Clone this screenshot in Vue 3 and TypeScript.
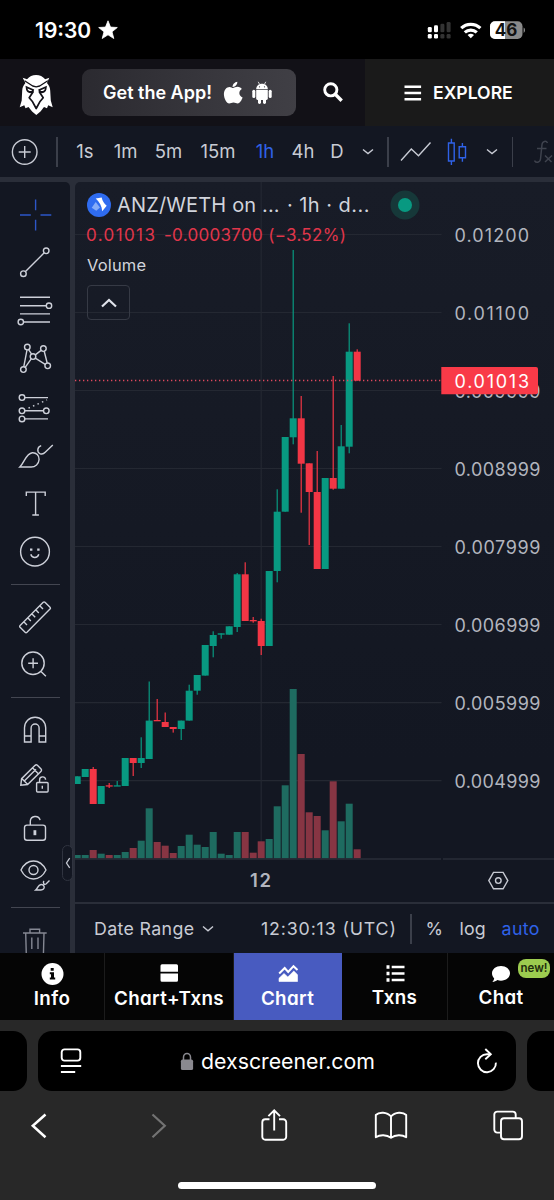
<script setup lang="ts">
type Candle = [top: number, bottom: number, high: number, low: number, up: 0 | 1, volumeTop: number]

// Pixel rows on the price pane: body top, body bottom, wick top, wick bottom, direction, volume top
const rows: Candle[] = [
  [776.3, 784, 776.3, 784, 1, 855],
  [769, 777, 769, 777, 1, 855],
  [769, 804, 767, 804, 0, 850],
  [786, 804, 786, 804, 1, 853.7],
  [785.3, 786.6, 783, 788, 0, 855],
  [785.3, 786.6, 781, 786, 1, 855],
  [758, 786, 758, 786, 1, 852],
  [758, 763, 758, 776, 0, 848],
  [758, 763, 737.3, 768, 1, 840.7],
  [720.6, 759, 681.5, 759, 1, 808.3],
  [720, 721.3, 699, 721, 0, 842],
  [722, 727, 712.5, 727, 0, 845.7],
  [727, 729, 727, 732.6, 0, 853],
  [720.6, 729, 720.6, 740, 1, 846],
  [690.7, 720.6, 684.7, 720.6, 1, 834.7],
  [675, 690.7, 675, 694.7, 1, 844.7],
  [645, 675.6, 645, 675.6, 1, 847],
  [635, 646, 631.3, 657.3, 1, 832],
  [633.3, 634.7, 633.3, 638.7, 1, 853.7],
  [626.3, 634.7, 626.3, 634.7, 1, 855],
  [574.3, 627, 573, 632, 1, 832],
  [574.3, 621, 562.3, 621, 0, 832],
  [620, 621.3, 617, 622.7, 0, 852.7],
  [621, 646, 618.7, 655, 0, 841.3],
  [571, 646, 571, 646, 1, 839],
  [511.7, 571, 489.3, 582.3, 1, 806.3],
  [437, 511.7, 437, 511.7, 1, 785.3],
  [418.3, 437.3, 250, 444.3, 1, 689],
  [418.3, 463.7, 396, 512.7, 0, 754],
  [463.3, 492, 463.3, 545, 0, 812.3],
  [492, 569, 451, 569, 0, 816],
  [478, 569, 478, 569, 1, 830.3],
  [478, 488.7, 376, 489.7, 0, 781.3],
  [446.3, 488.7, 425, 488.7, 1, 821.3],
  [351.7, 446.7, 323.3, 453.3, 1, 803.7],
  [351.7, 380.7, 349.3, 380.7, 0, 849.3],
]

const candles = rows.map(([top, bottom, high, low, up, vol], i) => ({
  x: 77.2 + i * 8,
  top,
  height: bottom - top,
  high,
  low,
  cls: up ? 'up' : 'down',
  vol,
}))

const prices = [
  { y: 234.5, label: '0.01200', w: 74.5 },
  { y: 312.5, label: '0.01100', w: 74.5 },
  { y: 390.5, label: '0.009999', w: 86 },
  { y: 468.5, label: '0.008999', w: 86 },
  { y: 546.5, label: '0.007999', w: 86 },
  { y: 624.5, label: '0.006999', w: 86 },
  { y: 702.7, label: '0.005999', w: 86 },
  { y: 780.7, label: '0.004999', w: 86 },
]
</script>

<template>
  <div class="phone">
    <header class="status">
      <span class="clock">19:30</span>
      <svg class="star" width="20" height="20" viewBox="0 0 20 20"><path d="M10 .8l2.5 6.3 6.8.4-5.3 4.3 1.8 6.7L10 14.8l-5.8 3.7L6 11.8.7 7.5l6.8-.4z" fill="#fff" stroke="#fff" stroke-width=".8" stroke-linejoin="round" /></svg>
      <svg class="signals" width="100" height="22" viewBox="425 20 100 22">
        <g fill="#fff">
          <rect x="427.8" y="27" width="4" height="5.3" rx="1.3" /><rect x="434" y="25.3" width="4" height="7" rx="1.3" />
          <rect x="427.8" y="34" width="4" height="4.6" rx="1.3" /><rect x="434" y="34" width="4" height="4.6" rx="1.3" />
        </g>
        <g fill="#333">
          <rect x="440.4" y="23.7" width="4" height="8.6" rx="1.3" /><rect x="446.6" y="22" width="4" height="10.3" rx="1.3" />
          <rect x="440.4" y="34" width="4" height="4.6" rx="1.3" /><rect x="446.6" y="34" width="4" height="4.6" rx="1.3" />
        </g>
        <g fill="none" stroke="#fff" stroke-width="3.200">
          <path d="M461.2 28.2a14 14 0 0 1 19.2 0" /><path d="M464.8 32.400a9 9 0 0 1 12 0" />
        </g>
        <path d="M470.8 38.2l-3.2-3.200a5 5 0 0 1 6.4 0z" fill="#fff" />
        <rect x="490" y="21.3" width="32.5" height="17.6" rx="5" fill="#8a8a8a" />
        <path d="M495 21.3h10v17.6h-10a5 5 0 0 1-5-5v-7.6a5 5 0 0 1 5-5z" fill="#fff" />
        <path d="M523.6 27.500c2 1 2 4.400 0 5.400z" fill="#8a8a8a" />
        <text x="506" y="36" text-anchor="middle" class="battery">46</text>
      </svg>
    </header>

    <nav class="site">
      <svg class="owl" width="36" height="42" viewBox="18 73 36 42">
        <path fill="#fff" d="M22.700 77.800l4.300 1.400c2.300-2.700 5.500-4.200 9.100-4.200s6.800 1.500 9.100 4.200l4.100-1.400-2.300 5.200c2 2.200 3 4.500 3.200 7.500l.6 10 1.900 6.800-4.500-2-1.200 3-3-1.400-3.500 4.600-4.200 3.500-4.200-3.500-3.600-4.600-3 1.400-1.200-3-4.600 2 2-6.800.5-10c.2-3 1.300-5.300 3.200-7.500z" />
        <g fill="none" stroke="#121117" stroke-linejoin="round" stroke-linecap="round">
          <path d="M25 81l7.700 5 3.500.8 3.500-.8 7.700-5" stroke-width="1.300" />
          <path d="M33 92l-3.800 5.800 3.400 4 3.600 6.700 3.600-6.700 3.400-4-3.800-5.800" stroke-width="1.700" />
        </g>
        <path d="M25.500 85.800l8.700 3.700-1.200 3.600c-3.500.8-6.500-.7-7-3.600zM46.900 85.800l-8.700 3.700 1.200 3.600c3.500.8 6.500-.7 7-3.600z" fill="#121117" />
        <path d="M27.500 88.400l4.700 2c-1.700 1.400-4.200.6-4.700-2zM44.900 88.400l-4.700 2c1.700 1.400 4.200.6 4.700-2z" fill="#fff" />
      </svg>
      <div class="get-app">
        <span>Get the App!</span>
        <svg class="apple" viewBox="0 0 20 24" width="20" height="24"><path fill="#fff" d="M14.300.7c.3 2.700-2.300 5.500-4.700 5.200C9.400 3.500 11.700 1 14.300.7zM10 7c1.100 0 2.500-1.200 4.600-1.200 1.800 0 3.400.9 4.200 2.300-3.700 2.300-3 7 .8 8.500-.9 2.800-3 6-4.900 6-1.500 0-2.300-1-4.200-1s-2.700 1-4.300 1C3.700 22.600.9 17.500.9 13.300c0-4.700 2.800-7.400 5.600-7.400C8 5.900 9.300 7 10 7z" /></svg>
        <svg class="android" viewBox="0 0 20 24" width="20" height="24"><g fill="#fff"><path d="M4.200 8.200C4.200 5 6.700 2.800 10 2.800s5.800 2.200 5.800 5.400z" /><path d="M6.200.8l1.500 2.700M13.800.8l-1.500 2.700" stroke="#fff" stroke-width=".8" /><path d="M4.200 9h11.600v8.600c0 .9-.6 1.400-1.400 1.400H5.600c-.8 0-1.400-.5-1.400-1.400z" /><rect x=".3" y="8.700" width="3" height="8.300" rx="1.500" /><rect x="16.700" y="8.700" width="3" height="8.300" rx="1.500" /><rect x="6" y="16" width="3" height="7" rx="1.400" /><rect x="11" y="16" width="3" height="7" rx="1.400" /></g><g fill="#3b3a40"><circle cx="7.500" cy="5.800" r=".6" /><circle cx="12.500" cy="5.800" r=".6" /></g></svg>
      </div>
      <svg class="search" width="20" height="20" viewBox="0 0 20 20"><g fill="none" stroke="#fff"><circle cx="7.800" cy="7.800" r="6.100" stroke-width="2.900" /><path d="M12.500 12.500l5 5" stroke-width="3.400" stroke-linecap="square" /></g></svg>
      <div class="explore">
        <svg width="18" height="16" viewBox="0 0 18 16"><path d="M.5 1.800h16.600M.5 8h16.600M.5 14.200h16.600" stroke="#fff" stroke-width="2.500" /></svg>
        <span>EXPLORE</span>
      </div>
    </nav>

    <div class="toolbar">
      <svg width="28" height="28" viewBox="0 0 28 28" class="ln"><circle cx="13.700" cy="14" r="12.300" /><path d="M7.700 14h12M13.700 8v12" /></svg>
      <i class="vsep"></i>
      <span>1s</span><span>1m</span><span>5m</span><span>15m</span><span class="blue">1h</span><span>4h</span><span>D</span>
      <svg width="12" height="8" viewBox="0 0 12 8" class="ln"><path d="M1 1.500l5 4 5-4" /></svg>
      <i class="vsep"></i>
      <svg width="32" height="24" viewBox="0 0 32 24" class="ln"><path d="M1 20.500L11.300 9l7.200 6.700L30.500 2.500" /></svg>
      <svg width="20" height="28" viewBox="0 0 20 28" class="ln blue"><path d="M1.500 5h5.700v18H1.500zM4.400.8V5M4.400 23v4M12.200 8.800h6.300v11h-6.300zM15.400 5v3.800M15.400 19.800v4" /></svg>
      <svg width="12" height="8" viewBox="0 0 12 8" class="ln"><path d="M1 1.500l5 4 5-4" /></svg>
      <i class="vsep"></i>
      <svg class="fx" width="20" height="28" viewBox="0 0 20 28"><path d="M13.500 5c-1.200-2.500-5-2.200-5.500 1.500L6.500 21c-.5 3.700-4.500 4.200-6 1.500M3 10.500h9.500M11 17.500l6.500 6.500M18 17.500L11 24" fill="none" stroke="#3f434e" stroke-width="1.500" /></svg>
    </div>

    <div class="workspace">
      <aside class="tools">
        <svg class="crosshair" viewBox="0 191 70 48.150"><path d="M20 215h10.800M40.500 215h10.800M35.600 199.500v10.800M35.600 219.800v10.800" /></svg>
        <svg viewBox="0 239.150 70 48.150"><circle cx="46.200" cy="251" r="2.800" /><circle cx="23.400" cy="273.800" r="2.800" /><path d="M25.500 271.700L44.200 253" /></svg>
        <svg viewBox="0 287.300 70 48.150"><path d="M20 297.600h30M20 306h26M20 314.200h30M24 322.300h26" /><circle cx="49" cy="306" r="2.700" /><circle cx="20.800" cy="322.300" r="2.700" /></svg>
        <svg viewBox="0 335.450 70 48.150"><circle cx="27.300" cy="347.500" r="2.800" /><circle cx="43.400" cy="349" r="2.800" /><circle cx="33" cy="357" r="2.800" /><circle cx="23.400" cy="370" r="2.800" /><circle cx="47.700" cy="366.300" r="2.800" /><path d="M27 350.300l-3.200 16.900M28.600 350l3 4.500M35.300 355.300l5.800-4.500M44.200 351.700l3 11.800M35.300 358.600l9.900 6.200M25.200 367.800l6-8.500" /></svg>
        <svg viewBox="0 383.600 70 48.150"><circle cx="22" cy="397.200" r="2.800" /><circle cx="22" cy="410.400" r="2.800" /><circle cx="22" cy="418.500" r="2.800" /><circle cx="46.300" cy="410.400" r="2.800" /><path d="M24.800 397.200H48M24.800 410.400h18.700M24.800 418.500H48" /><path d="M28.500 407.700l18.500-8.200" stroke-dasharray="1.500 3.400" /></svg>
        <svg viewBox="0 431.750 70 48.150"><path d="M19.800 466.800c5-4.800 6-13.500 12.500-14.300 4-.3 7 3 6.800 6.800-.3 4.300-3.800 7.500-8 7.500zM41.200 445.300c-4 1.200-4.500 6.200-1.300 8 2.200 1.100 3.800.4 5.300-1.200l7.600-7.400" /></svg>
        <svg viewBox="0 479.900 70 48.150"><path d="M26.300 496v-4h18.900v4M35.600 492v22.800M32.300 514.900h6.600" /></svg>
        <svg viewBox="0 528.050 70 48.150"><circle cx="35" cy="551.700" r="14.400" /><path d="M30.800 554.300c1.300 4.400 6.700 4.400 8 0" /><path d="M31.200 548.500v2.200M38.400 548.500v2.200" stroke-width="2.400" /></svg>
        <hr>
        <svg viewBox="0 593 70 48.150"><path d="M43.200 602.300q.9-.8 1.800 0l5 5q.9.900 0 1.800l-23 23.200q-1 .9-1.900 0l-5-5q-.9-.9 0-1.800zM40 606l3 3M36 610l2.800 3M32 614l3.200 3.200M28 618l2.800 3M24 622l3 3" /></svg>
        <svg viewBox="0 641.150 70 48.150"><circle cx="33" cy="663.400" r="11.200" /><path d="M28.200 663.400h9.800M33.100 658.500v9.800M41 671.600l4.900 4.800" /></svg>
        <hr>
        <svg viewBox="0 707 70 48.150"><path d="M24.500 743v-14.200a10.600 10.600 0 0 1 21.200 0V743h-6.600v-14a4 4 0 0 0-8 0v14zM24.500 737h6.600M39.100 737h6.600" /></svg>
        <svg viewBox="0 755.150 70 48.150"><path d="M20.800 785.300l.8-6.500 13.500-13.300q1.200-1 2.300 0l3.700 3.700q1 1.100 0 2.300l-13.500 13.200zM32.500 768l6.300 6.300M22 779l5.500 5.500M36 769.500L24.500 781" /><rect x="36.600" y="782.600" width="11.500" height="9.600" rx="1" /><path d="M39.600 782.500v-2.300a3 3 0 0 1 6-.3M42.300 786v2.800" /></svg>
        <svg viewBox="0 803.300 70 48.150"><rect x="24.500" y="825.400" width="21" height="15.200" rx="2.500" /><path d="M30.300 825.400v-4a5 5 0 0 1 9.800-1" /><path d="M34.900 830.500v5" stroke-width="2.800" /></svg>
        <svg viewBox="0 851.450 70 48.150"><path d="M21 870.500c6-12 19-12 25 0-6 12-19 12-25 0z" /><circle cx="33.500" cy="870.500" r="4.500" /><path d="M35.700 890.400c2.300-2 2.300-5.200 5.300-5.500 4-.2 4.500 5.500 0 5.500zM44 881.500c-1.500 1.500.2 4.300 2 3l3.500-3.500" /></svg>
        <hr>
        <svg viewBox="0 917 70 48.150" class="dim"><path d="M23 934h23.700M30 934v-3.800h9.600v3.800M25.700 934l.6 22M44 934l-.6 22M31.800 938.500V950M38 938.500V950" /></svg>
      </aside>

      <main class="chart">
        <svg class="pane" width="479" height="720" viewBox="75 182 479 720">
          <g class="grid">
            <path v-for="p in prices" :key="p.label" :d="`M75 ${p.y}H441.500`" />
            <path d="M261.200 182V858" />
          </g>
          <g v-for="c in candles" :key="c.x">
            <rect :class="['vol', c.cls]" :x="c.x - 3.5" :y="c.vol" width="7" :height="858.3 - c.vol" />
            <rect :class="c.cls" :x="c.x - 0.6" :y="c.high" width="1.200" :height="c.low - c.high" />
            <rect :class="c.cls" :x="c.x - 3.5" :y="c.top" width="7" :height="c.height" />
          </g>
          <path d="M75 380.500H441" stroke="#e0485e" stroke-width="1.300" stroke-dasharray="1.300 2.700" />
          <path d="M75 859H441M443 859H554" stroke="#2a2e39" stroke-width="1.500" />
          <g class="axis">
            <text v-for="p in prices" :key="p.label" x="454.500" :y="p.y + 7" :textLength="p.w">{{ p.label }}</text>
            <path d="M441.300 367H536a2 2 0 0 1 2 2V392.300a2 2 0 0 1-2 2H441.300z" fill="#f93a48" />
            <text class="last" x="454.500" y="387.600" textLength="74.500">0.01013</text>
            <text class="day" x="250" y="887.400">12</text>
          </g>
          <path d="M493.500 872.400h9.600l4.700 8.200-4.700 8.200h-9.600l-4.700-8.200z" fill="none" stroke="#c6c9d2" stroke-width="1.400" />
          <circle cx="498.300" cy="880.600" r="2.800" fill="none" stroke="#c6c9d2" stroke-width="1.400" />
        </svg>

        <section class="legend">
          <div class="title">
            <svg width="24" height="24" viewBox="0 0 24 24"><circle cx="12" cy="12" r="12" fill="#2f6cf0" /><path d="M4.700 14.700l4-5.700 4.300 5.500-3.700 3.300z" fill="#86acf8" /><path d="M8.700 5.600l6-1c.7 3.400 2.300 5.900 5 8.100l-4.500 5.600c-.3-5-2.700-9.500-6.500-12.700z" fill="#fff" /></svg>
            <span class="pair">ANZ/WETH on ...</span><span class="meta">· 1h · d...</span>
            <i class="live"></i>
          </div>
          <div class="change"><span class="value">0.01013</span><span class="delta">-0.0003700 (−3.52%)</span></div>
          <div class="volume">Volume</div>
          <div class="fold"><svg width="18" height="12" viewBox="0 0 18 12"><path d="M2 9.500l7-6.500 7 6.500" fill="none" stroke="#e0e3eb" stroke-width="2.200" /></svg></div>
        </section>

        <footer class="range">
          <span class="date">Date Range</span>
          <svg class="ln" width="12" height="8" viewBox="0 0 12 8"><path d="M1 1.500l5 4.300 5-4.300" /></svg>
          <span class="time">12:30:13 (UTC)</span>
          <i class="vsep"></i>
          <span class="pct">%</span><span class="log">log</span><span class="auto">auto</span>
        </footer>
      </main>
      <div class="handle"><svg width="6" height="12" viewBox="0 0 6 12"><path d="M4.700 1.200L1.500 6l3.200 4.800" fill="none" stroke="#c6c9d2" stroke-width="1.300" /></svg></div>
    </div>

    <nav class="tabs">
      <div class="tab">
        <svg width="24" height="24" viewBox="0 0 24 24"><circle cx="12.500" cy="12" r="11" fill="#fff" /><path d="M10.700 6h3v2.800h-3zM9.800 10.300H14v5.200h1.200v2H9.800v-2H11v-3.200H9.800z" fill="#050505" /></svg>
        <span>Info</span>
      </div>
      <div class="tab">
        <svg width="24" height="24" viewBox="0 0 24 24"><path d="M5 2.300h14.500a1.500 1.500 0 0 1 1.500 1.500v6H3.500v-6A1.500 1.500 0 0 1 5 2.300zM3.500 11.600H21v6.700a1.500 1.500 0 0 1-1.500 1.500H5a1.500 1.500 0 0 1-1.500-1.500z" fill="#fff" /></svg>
        <span>Chart+Txns</span>
      </div>
      <div class="tab active">
        <svg width="24" height="24" viewBox="0 0 24 24"><path d="M3 19.500v-3.200l5-4.800 3.800 3.500 6-6 3.700 3.700v6.800z" fill="#fff" stroke="#fff" stroke-width=".6" /><path d="M3.200 11.500L8.700 6l3.500 4 5.300-5.800 4 3.800" fill="none" stroke="#fff" stroke-width="2" /></svg>
        <span>Chart</span>
      </div>
      <div class="tab raised">
        <svg width="24" height="24" viewBox="0 0 24 24"><path d="M3.500 5h3M3.500 11.500h3M3.500 18h3" stroke="#fff" stroke-width="3.400" /><path d="M8.700 5h12.800M8.700 11.500h12.800M8.700 18h12.800" stroke="#fff" stroke-width="2.500" /></svg>
        <span>Txns</span>
      </div>
      <div class="tab raised">
        <svg width="24" height="24" viewBox="0 0 24 24"><path d="M12 4c5 0 9 3.200 9 7.300s-4 7.400-9 7.400c-1.300 0-2.500-.2-3.600-.6-1.300 1-3 1.900-5 1.900 1-1 1.600-2.200 1.800-3.500C3.800 15.200 3 13.300 3 11.300 3 7.200 7 4 12 4z" fill="#fff" /></svg>
        <span>Chat</span>
        <b class="new">new!</b>
      </div>
    </nav>

    <footer class="browser">
      <div class="pages">
        <div class="page prev"></div>
        <div class="page current">
          <svg width="22" height="26" viewBox="0 0 22 26"><g fill="none" stroke="#fff" stroke-width="1.900"><rect x="1.700" y="1.400" width="18.600" height="11.200" rx="2.800" /><path d="M.9 18h20.300M.9 24h14.300" /></g></svg>
          <div class="host">
            <svg width="14" height="19" viewBox="0 0 14 19"><rect x=".9" y="7.500" width="12.200" height="10.600" rx="1.700" fill="#8a898f" /><path d="M3.500 8V5.200a3.500 3.800 0 0 1 7 0V8" fill="none" stroke="#8a898f" stroke-width="1.500" /></svg>
            <span>dexscreener.com</span>
          </div>
          <svg width="22" height="26" viewBox="0 0 22 26"><g fill="none" stroke="#fff" stroke-width="1.900"><path d="M14 6.200h-3a9 9 0 1 0 8.900 8.400" /><path d="M9.300 1l5.500 5.200-5.500 5" /></g></svg>
        </div>
        <div class="page next"></div>
      </div>
      <div class="actions">
        <svg width="20" height="28" viewBox="0 0 20 28"><path d="M16.500 2.500L3.800 13.800l12.700 11.500" fill="none" stroke="#fff" stroke-width="2.500" /></svg>
        <svg width="20" height="28" viewBox="0 0 20 28"><path d="M3.500 2.500l12.300 11.300L3.500 25.300" fill="none" stroke="#737373" stroke-width="2.200" /></svg>
        <svg width="30" height="36" viewBox="0 0 30 36"><path d="M10.500 11.300H6.300a3 3 0 0 0-3 3v14.500a3 3 0 0 0 3 3h17.900a3 3 0 0 0 3-3V14.300a3 3 0 0 0-3-3H20M15.200 22.500V2.500M9.400 8.200l5.800-5.800L21 8.200" fill="none" stroke="#fff" stroke-width="1.900" /></svg>
        <svg width="36" height="32" viewBox="0 0 36 32"><path d="M18 6.500c-4-4.800-12-4.800-15.200-1.500v22.300c4.300-3 10.800-2.800 15.200.5 4.400-3.300 10.900-3.500 15.200-.5V5C30 1.700 22 1.700 18 6.500zM18 6.500v21.300" fill="none" stroke="#fff" stroke-width="1.900" stroke-linejoin="round" /></svg>
        <svg width="34" height="32" viewBox="0 0 34 32"><g fill="none" stroke="#fff" stroke-width="1.900"><rect x="10" y="8.300" width="21" height="21" rx="3" /><path d="M9.500 22.600H6.300a3 3 0 0 1-3-3V4.600a3 3 0 0 1 3-3h15.400a3 3 0 0 1 3 3v3.300" /></g></svg>
      </div>
      <div class="home"></div>
    </footer>
  </div>
</template>

<style>
html, body { margin: 0; background: #000; }
</style>

<style scoped>
.phone { width: 554px; height: 1200px; overflow: hidden; display: flex; flex-direction: column; background: #000; color: #fff; font-family: Inter, "Liberation Sans", sans-serif; }
.phone * { box-sizing: border-box; }
.phone svg { display: block; flex: none; }
span, b { white-space: nowrap; }

.status { height: 59px; flex: none; display: flex; padding: 20px 29px 0 35px; }
.clock { font-size: 21px; font-weight: 600; line-height: 22px; width: 63px; }
.signals { margin-left: auto; }
.battery { font: 700 17px Inter, sans-serif; fill: #111; }

.site { height: 67px; flex: none; display: flex; align-items: center; background: #121117; font-weight: 600; font-feature-settings: "cv11"; }
.owl { margin-left: 18px; margin-top: 2px; }
.get-app { margin-left: 28px; width: 214px; height: 47px; border-radius: 9px; background: linear-gradient(90deg, #2b2a30, #403f45); display: flex; align-items: center; padding-left: 21px; font-size: 18px; }
.get-app span { width: 120px; }
.get-app .android { margin-left: 9px; }
.search { margin-left: 27px; margin-top: -1px; }
.explore { margin-left: auto; width: 189px; height: 67px; background: #1a1a1a; display: flex; align-items: center; padding-left: 39px; gap: 11px; font-size: 17.600px; }

.toolbar { height: 51px; flex: none; background: #131722; display: grid; grid-template-columns: 50px 14px 42px 39px 47px 52px 42px 34px 34px 28px 12px 44px 38px 32px 9px 37px; align-items: center; justify-items: center; color: #c8cbd4; font-size: 18.500px; }
.toolbar span { margin-top: -1px; }
.vsep { width: 1.500px; height: 30px; background: #3b3f4a; }
.ln { fill: none; stroke: #c8cbd4; stroke-width: 1.400; }
.ln.blue { stroke: #2f62e8; }
.blue { color: #2f62e8; }
.fx { justify-self: end; }

.workspace { height: 776px; flex: none; position: relative; display: flex; gap: 5px; padding-top: 5px; background: #2a2e39; overflow: hidden; }
.tools { width: 70px; height: 771px; padding-top: 9px; background: #131722; border-top-right-radius: 5px; overflow: hidden; }
.tools svg { width: 70px; height: 48.150px; fill: none; stroke: #cdd0d9; stroke-width: 1.400; }
.tools svg.crosshair { stroke: #2d57c9; }
.tools svg.dim { stroke: #858893; }
.tools hr { width: 49px; height: 1px; margin: 8px 0 8px 10.500px; border: 0; background: #434651; }
.handle { position: absolute; left: 62px; top: 668px; width: 11px; height: 36px; border: 1px solid #303440; border-radius: 6px; background: #131722; display: flex; align-items: center; justify-content: center; }

.chart { position: relative; width: 479px; height: 771px; background: linear-gradient(#181c27, #131722 75%); border-top-left-radius: 5px; }
.grid { stroke: #242832; stroke-width: 1.200; fill: none; }
.up { fill: #089981; }
.down { fill: #f23645; }
.vol.up { fill: #1e6b60; }
.vol.down { fill: #873543; }
.axis { font: 400 18px Inter, sans-serif; fill: #b2b5be; }
.axis .last { fill: #fff; }
.axis .day { font-weight: 600; font-size: 18.500px; letter-spacing: 1.800px; }

.legend { position: absolute; left: 12px; top: 8px; color: #d1d4dc; }
.title { display: flex; align-items: center; height: 30px; font-size: 20px; letter-spacing: .15px; }
.pair { margin-left: 6px; width: 170px; }
.meta { width: 87px; letter-spacing: .45px; }
.live { width: 14px; height: 14px; border-radius: 50%; background: #089981; box-shadow: 0 0 0 7.500px #163839; margin-left: 24px; }
.change { display: flex; height: 30px; align-items: center; margin-left: -2px; color: #e0364b; font-size: 17px; }
.value { width: 79px; letter-spacing: 1.400px; padding-left: 1px; }
.delta { letter-spacing: .3px; }
.volume { height: 31px; line-height: 31px; font-size: 16.500px; letter-spacing: .15px; }
.fold { margin-top: 4px; width: 43px; height: 35px; border: 1.500px solid #363a45; border-radius: 4px; display: flex; align-items: center; justify-content: center; }

.range { height: 51px; border-top: 2px solid #2a2e39; display: flex; align-items: center; padding: 0 0 0 19px; color: #c8cbd4; font-size: 17.800px; }
.date { width: 108px; letter-spacing: .350px; }
.time { margin-left: 47px; width: 149px; letter-spacing: .850px; }
.pct { margin-left: 14px; width: 34px; }
.log { width: 42px; letter-spacing: .2px; }
.auto { color: #2f62e8; letter-spacing: .4px; }

.tabs { height: 67px; flex: none; display: grid; grid-template-columns: 105px 129px 108px 106px 106px; background: #050505; font-size: 18.800px; font-weight: 600; font-feature-settings: "cv11"; }
.tab { position: relative; display: flex; flex-direction: column; align-items: center; padding-top: 9px; border-right: 1px solid #1c1c1c; line-height: 22px; }
.tab span { margin-top: 2px; letter-spacing: .350px; }
.tab:last-child { border: 0; }
.tab.active { background: #485bc0; border-color: #485bc0; }
.tab.raised span { margin-top: 1px; }
.new { position: absolute; right: 4px; top: 6px; width: 32px; height: 19px; border-radius: 8px; background: #9ccc4f; color: #1e2c0d; font-size: 11.500px; font-weight: 600; line-height: 18px; text-align: center; }

.browser { height: 180px; flex: none; background: #282828; }
.pages { display: flex; gap: 11px; padding-top: 11px; }
.page { height: 60px; background: #000; flex: none; }
.prev { width: 27px; border-radius: 0 14px 14px 0; }
.current { width: 478px; border-radius: 14px; display: flex; align-items: center; justify-content: space-between; padding: 0 18px 0 22px; }
.next { width: 27px; border-radius: 14px 0 0 14px; }
.host { display: flex; align-items: center; gap: 7px; margin-left: -3px; font-size: 21.300px; }
.actions { display: grid; grid-template-columns: 78px 162px 68px 166px 68px; align-items: center; justify-items: center; height: 69px; padding: 0; }
.home { width: 198px; height: 7px; border-radius: 4px; background: #fff; margin: 22px auto 0; }
</style>
